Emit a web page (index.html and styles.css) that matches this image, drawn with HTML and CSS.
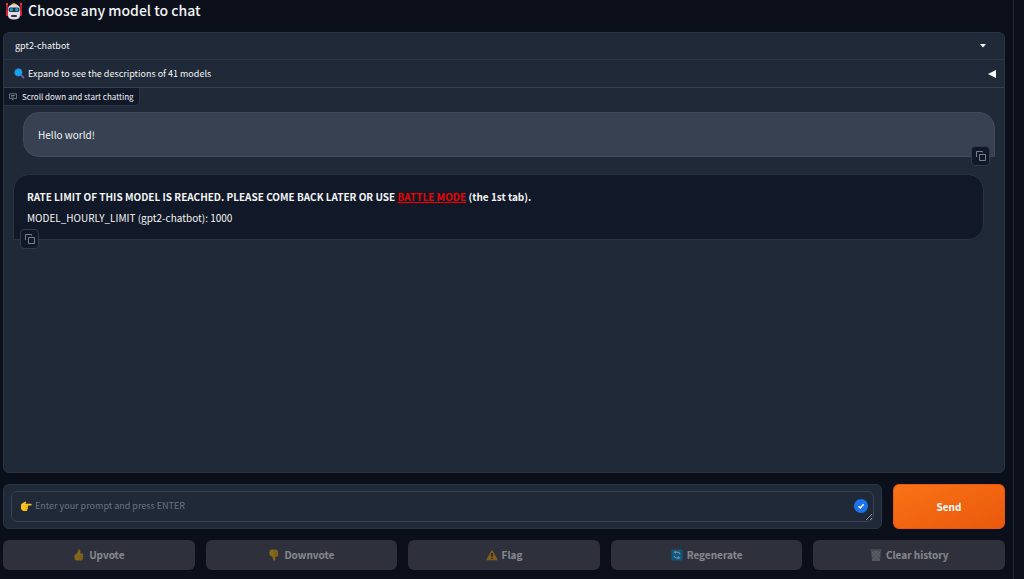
FILE: index.html
```html
<!DOCTYPE html>
<html lang="en">
<head>
    <meta charset="UTF-8">
    <meta name="viewport" content="width=device-width, initial-scale=1.0">
    <title>Choose any model to chat</title>
    <link rel="stylesheet" href="styles.css">
</head>
<body>
    <main class="container">
        <h1 class="title">
            <svg class="title-icon" viewBox="0 0 18 18" aria-hidden="true">
                <path d="M2 2v9M16 2v9" stroke="#d5253c" stroke-width="1.5"/>
                <circle cx="2" cy="2" r="1.2" fill="#ee3048"/>
                <circle cx="16" cy="2" r="1.2" fill="#ee3048"/>
                <rect x="1" y="8" width="3" height="6" rx="1" fill="#d5253c"/>
                <rect x="14" y="8" width="3" height="6" rx="1" fill="#d5253c"/>
                <path d="M5.500 3.500q3.500-5 7 0z" fill="#f5a623"/>
                <path d="M3 7q0-4.500 6-4.500t6 4.500v6.500q0 4-6 4t-6-4z" fill="#e3d8e8"/>
                <rect x="3.500" y="5.500" width="11" height="4.500" rx="2" fill="#26303e"/>
                <circle cx="6.300" cy="7.700" r="1.600" fill="#16a4d8"/>
                <circle cx="11.700" cy="7.700" r="1.600" fill="#16a4d8"/>
                <rect x="6" y="13" width="6" height="2" rx="1" fill="#303038"/>
            </svg>
            Choose any model to chat
        </h1>

        <section class="panel">
            <div class="model-row">
                <select class="model-select" aria-label="Model">
                    <option>gpt2-chatbot</option>
                </select>
                <svg class="caret" viewBox="0 0 6 4" aria-hidden="true"><path d="M0 0h6L3 3.500z" fill="#fff"/></svg>
            </div>

            <details class="descriptions">
                <summary>
                    <svg class="search-icon" viewBox="0 0 12 12" aria-hidden="true">
                        <path d="M7.500 7.500l2.800 2.800" stroke="#7454a6" stroke-width="2.200" stroke-linecap="round"/>
                        <circle cx="4.800" cy="4.800" r="4" fill="#12a5f4" stroke="#3186bd" stroke-width="1"/>
                    </svg>
                    <span>Expand to see the descriptions of 41 models</span>
                    <svg class="arrow" viewBox="0 0 8 8" aria-hidden="true"><path d="M8 0v8L0 4z" fill="#fff"/></svg>
                </summary>
            </details>

            <div class="chat">
                <div class="chat-label">
                    <svg viewBox="0 0 8 8" fill="none" stroke="#7e8693" stroke-width=".8" aria-hidden="true">
                        <path d="M.5.8h7v4.700H4.800L3.500 7.200V5.500h-3zM2 2.500h4M2 4h3"/>
                    </svg>
                    Scroll down and start chatting
                </div>

                <div class="message user">
                    <p>Hello world!</p>
                    <button class="copy" type="button" aria-label="Copy message">
                        <svg viewBox="0 0 10 10" aria-hidden="true"><path d="M3.500 3.500h6v6h-6zM.5 6V.5H6.500v1"/></svg>
                    </button>
                </div>

                <div class="message bot">
                    <p><strong>RATE LIMIT OF THIS MODEL IS REACHED. PLEASE COME BACK LATER OR USE <a href="#battle">BATTLE MODE</a> (the 1st tab).</strong></p>
                    <p>MODEL_HOURLY_LIMIT (gpt2-chatbot): 1000</p>
                    <button class="copy" type="button" aria-label="Copy message">
                        <svg viewBox="0 0 10 10" aria-hidden="true"><path d="M3.500 3.500h6v6h-6zM.5 6V.5H6.500v1"/></svg>
                    </button>
                </div>
            </div>
        </section>

        <form class="prompt-row">
            <div class="prompt-box">
                <div class="prompt-field">
                    <textarea class="prompt" rows="1" aria-label="Prompt" placeholder="Enter your prompt and press ENTER"></textarea>
                    <svg class="hand" viewBox="0 0 12 12" aria-hidden="true">
                        <path d="M1 5q0-1 1-1.500L4.500 2q1-.8 1.500 0 .3.700-.8 1.700H10.700q1 0 1 .9t-1 .9H7.500q.9.300.7 1.100 0 .7-.7.800.7.500.4 1.200-.2.600-.8.700.4.500 0 1.100-.4.500-1.300.5H3.500Q1 10.500 1 8z" fill="#fcc21b"/>
                        <path d="M5 5.700h2.500M5 7.500h2.400M5 9.300h2" stroke="#e59b12" stroke-width=".5"/>
                    </svg>
                    <svg class="badge" viewBox="0 0 14 14" aria-hidden="true">
                        <circle cx="7" cy="7" r="7" fill="#1a73e8"/>
                        <path d="M4.500 7.200l1.800 1.800 3.300-3.700" fill="none" stroke="#fff" stroke-width="1.500"/>
                    </svg>
                </div>
            </div>
            <button class="send" type="button">Send</button>
        </form>

        <div class="actions">
            <button type="button" disabled>
                <svg viewBox="0 0 12 12" aria-hidden="true">
                    <path d="M1.500 6.500q0-1 1.300-1.300Q5 4 5.300 1.300 5.500.2 6.500.4q1.300.4.700 4.100h2q1 .1 1 1 0 .6-.5.900.8.400.6 1.200-.1.600-.6.800.5.500.3 1.100-.2.600-.7.700.2 1.400-1.500 1.400H4Q1.500 11.500 1.500 9z" fill="#fcbd20"/>
                    <path d="M6.500 6.500h3M6.500 8.300h3M6.300 10h2.700" stroke="#c58918" stroke-width=".5"/>
                </svg>
                Upvote
            </button>
            <button type="button" disabled>
                <svg viewBox="0 0 12 12" aria-hidden="true">
                    <path d="M1.500 5.500q0 1 1.300 1.300Q5 8 5.300 10.700q.2 1.100 1.200.9 1.300-.4.700-4.100h2q1-.1 1-1 0-.6-.5-.9.800-.4.600-1.200-.1-.6-.6-.8.500-.5.300-1.100-.2-.6-.7-.7Q9.500.5 7.800.5H4Q1.500.5 1.500 3z" fill="#fcbd20"/>
                    <path d="M6.500 5.500h3M6.500 3.700h3M6.300 2h2.700" stroke="#c58918" stroke-width=".5"/>
                </svg>
                Downvote
            </button>
            <button type="button" disabled>
                <svg viewBox="0 0 12 12" aria-hidden="true">
                    <path d="M6 1.500L11.200 10.800H.8z" fill="#f9ad29" stroke="#f9ad29" stroke-linejoin="round"/>
                    <path d="M6 4v3.800M6 8.700v1.300" stroke="#222" stroke-width="1.300"/>
                </svg>
                Flag
            </button>
            <button type="button" disabled>
                <svg viewBox="0 0 12 12" aria-hidden="true">
                    <rect x=".5" y=".5" width="11" height="11" rx="1" fill="#0aa5ed"/>
                    <path d="M9 5.200Q8.500 3.200 6 3.200H4M3 6.800q.5 2 3 2h2" fill="none" stroke="#fff" stroke-width="1.200"/>
                    <path d="M4.800 1.500v3.400L2.500 3.200zM7.200 7.100v3.400l2.300-1.700z" fill="#fff"/>
                </svg>
                Regenerate
            </button>
            <button type="button" disabled>
                <svg viewBox="0 0 12 12" aria-hidden="true">
                    <path d="M1 1.500h10L10 11.500H2z" fill="#878e92"/>
                    <path d="M.5 1h11M2 3l7 8M5 2l5 6M8 2l2 2.500M10 3l-7 8M7 2L2 8M4 2L2 4.500M2 11.300h8" stroke="#c9d0d4" stroke-width=".6"/>
                </svg>
                Clear history
            </button>
        </div>
    </main>
</body>
</html>
```
FILE: styles.css
```css
* {
    box-sizing: border-box;
}
body {
    margin: 0;
    background-color: #0b0f19;
    color: #f3f4f6;
    font-family: "Noto Sans CJK SC", "Open Sans", sans-serif;
    font-size: 10px;
    line-height: 16px;
}
button, select, textarea {
    font: inherit;
    color: inherit;
}
.container {
    display: flex;
    flex-direction: column;
    gap: 11px;
    min-height: 100vh;
    margin-right: 10px;
    padding: 0 8px 9px 3px;
    border-right: 1px solid #1f2937;
}
.title {
    display: flex;
    align-items: center;
    gap: 5px;
    margin: 0;
    padding-left: 2px;
    font-size: 14px;
    font-weight: 500;
    line-height: 21px;
}
.title-icon {
    width: 18px;
    height: 18px;
}
.panel {
    display: flex;
    flex: 1;
    flex-direction: column;
    background-color: #1f2937;
    border: 1px solid #2b3543;
    border-radius: 6px;
    overflow: hidden;
}
.model-row {
    position: relative;
    border-bottom: 1px solid #2b3543;
}
.model-select {
    display: block;
    width: 100%;
    height: 26px;
    padding: 0 11px;
    background: none;
    border: none;
    appearance: none;
    font-size: 9px;
}
.caret {
    position: absolute;
    top: 11px;
    right: 18px;
    width: 6px;
    height: 4px;
    pointer-events: none;
}
.descriptions {
    border-bottom: 1px solid #374151;
    font-size: 9px;
}
.descriptions summary {
    display: flex;
    align-items: center;
    gap: 3px;
    height: 27px;
    padding: 0 8px 0 10px;
    cursor: pointer;
}
.search-icon {
    width: 11px;
    height: 11px;
}
.arrow {
    width: 8px;
    height: 8px;
    margin-left: auto;
}
.chat-label {
    display: flex;
    align-items: center;
    gap: 5px;
    width: fit-content;
    height: 18px;
    padding: 0 5px;
    background-color: #111827;
    border: 1px solid #2b3543;
    border-width: 0 1px 1px 0;
    border-radius: 0 0 5px 0;
    font-size: 8px;
}
.chat-label svg {
    width: 8px;
    height: 8px;
}
.message {
    position: relative;
    padding: 11px 14px;
    border: 1px solid #374151;
    border-radius: 16px;
    line-height: 21px;
}
.message p {
    margin: 0;
}
.message a {
    color: #f00000;
}
.user {
    margin: 6px 9px 17px 19px;
    background-color: #374151;
    border-color: #424b59;
    border-bottom-right-radius: 0;
}
.bot {
    margin: 0 20px 20px 9px;
    padding-left: 13px;
    background-color: #111827;
    border-color: #293342;
    border-bottom-left-radius: 0;
}
.copy {
    position: absolute;
    bottom: -10px;
    display: flex;
    align-items: center;
    justify-content: center;
    width: 19px;
    height: 20px;
    padding: 0;
    background-color: #111827;
    border: 1px solid #303a49;
    border-radius: 4px;
}
.user .copy {
    right: 4px;
}
.bot .copy {
    left: 6px;
}
.copy svg {
    width: 10px;
    height: 10px;
    fill: none;
    stroke: #7a818d;
}
.prompt-row {
    display: flex;
    gap: 11px;
}
.prompt-box {
    flex: 1;
    padding: 6px 7px;
    background-color: #1f2937;
    border: 1px solid #2b3543;
    border-radius: 6px;
}
.prompt-field {
    position: relative;
}
.prompt {
    display: block;
    width: 100%;
    height: 31px;
    padding: 6px 32px 6px 23px;
    background-color: #1f2937;
    border: 1px solid #374151;
    border-radius: 6px;
    font-size: 9px;
    overflow: hidden;
    resize: vertical;
}
.prompt::placeholder {
    color: #6b7280;
}
.hand {
    position: absolute;
    top: 9px;
    left: 9px;
    width: 12px;
    height: 12px;
}
.badge {
    position: absolute;
    top: 8px;
    right: 6px;
    width: 14px;
    height: 14px;
}
.send {
    width: 112px;
    background: linear-gradient(to bottom right, #f97316, #ea580c);
    border: 1px solid #ea580c;
    border-radius: 6px;
    color: #fff;
    font-weight: bold;
    cursor: pointer;
}
.actions {
    display: grid;
    grid-template-columns: repeat(5, 1fr);
    gap: 11px;
}
.actions button {
    display: flex;
    align-items: center;
    justify-content: center;
    gap: 4px;
    height: 30px;
    background-color: #52545d;
    border: none;
    border-radius: 6px;
    color: #fff;
    font-weight: bold;
    opacity: 0.5;
}
.actions svg {
    width: 12px;
    height: 12px;
}
```
